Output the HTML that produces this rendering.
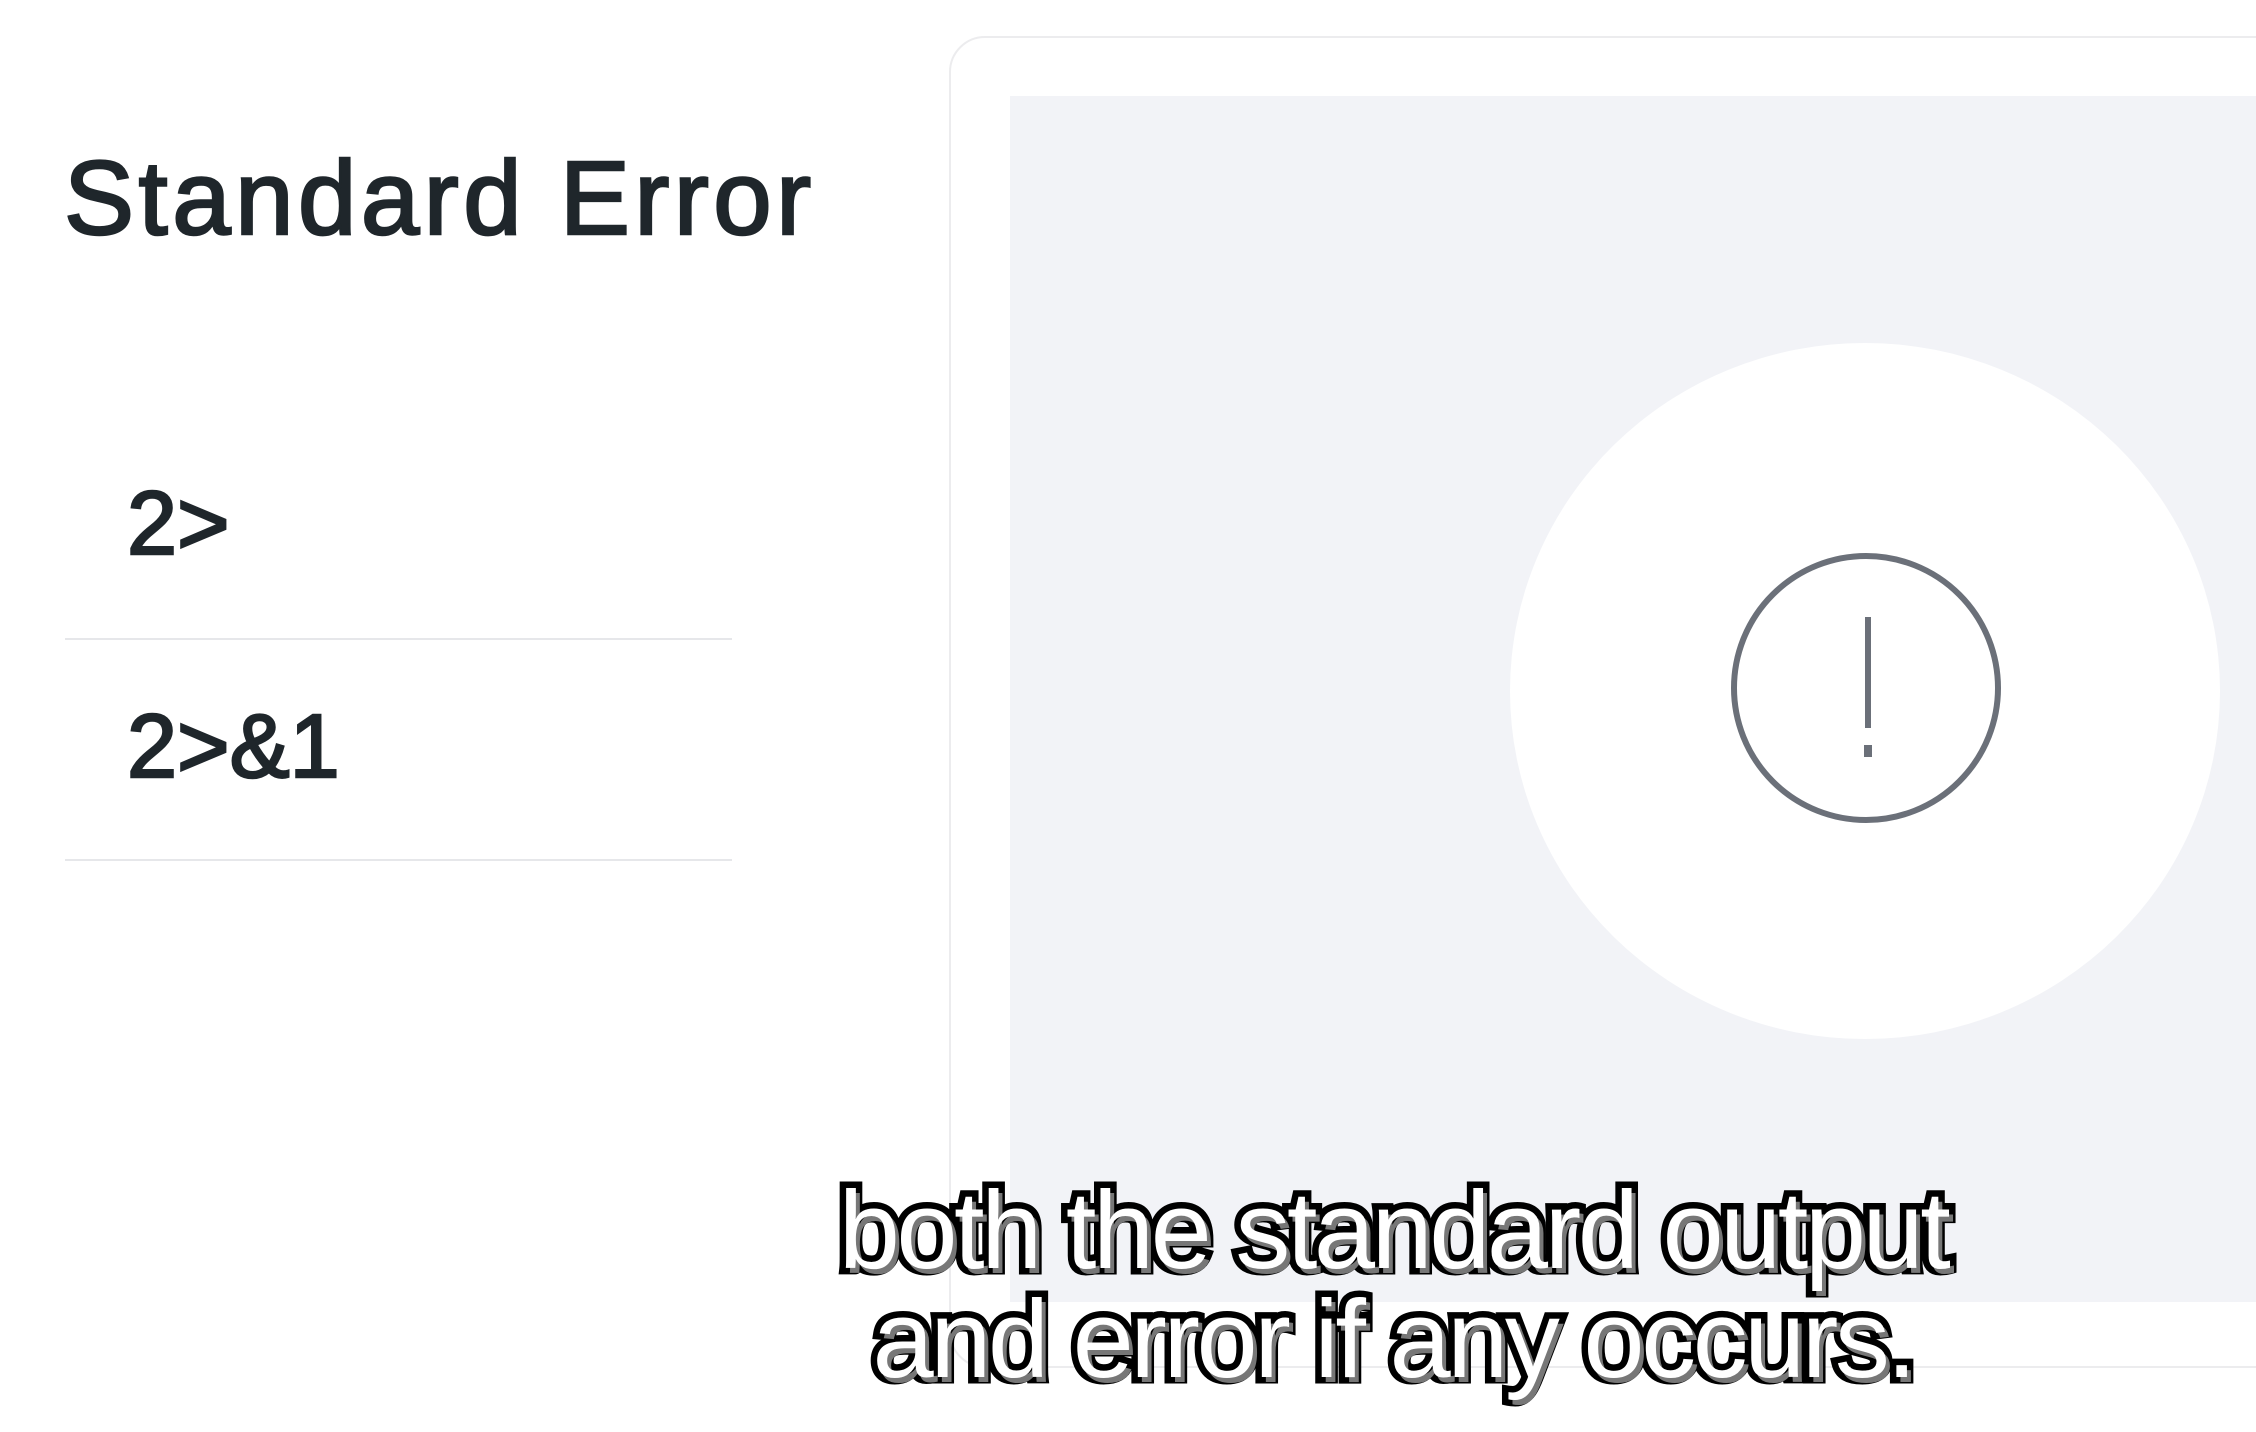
<!DOCTYPE html>
<html><head><style>
html,body{margin:0;padding:0}
body{width:2256px;height:1432px;background:#fff;position:relative;overflow:hidden;font-family:"Liberation Sans","DejaVu Sans",sans-serif;color:#1f262b}
.t{position:absolute;white-space:nowrap;-webkit-text-stroke:2.5px #1f262b}
.card{position:absolute;left:949px;top:36px;width:1400px;height:1328px;border:2px solid #ececee;border-radius:36px;background:#fff}
.gray{position:absolute;left:1010px;top:96px;width:1300px;height:1206px;background:#f2f3f7}
.line{position:absolute;left:65px;width:667px;height:2px;background:#e6e7ea}
.sub{position:absolute;left:0;width:2786px;text-align:center;font-size:110px;letter-spacing:-3.5px;color:#fff;-webkit-text-stroke:13px #000;paint-order:stroke fill;text-shadow:4px 5px 0 #777;white-space:nowrap}
</style></head><body>
<div class="card"></div>
<div class="gray"></div>
<svg style="position:absolute;left:0;top:0" width="2256" height="1432">
<ellipse cx="1865" cy="691" rx="355" ry="348" fill="#fff"/>
<circle cx="1866" cy="688" r="132" fill="none" stroke="#6b7079" stroke-width="6"/>
<line x1="1868" y1="617" x2="1868" y2="728" stroke="#6b7079" stroke-width="6"/>
<rect x="1864" y="745" width="8" height="12" fill="#6b7079"/>
</svg>
<div class="t" style="left:64px;top:146px;font-size:105px;line-height:1;letter-spacing:4.5px">Standard Error</div>
<div class="t" style="left:127px;top:479px;font-size:90px;line-height:1">2&gt;</div>
<div class="line" style="top:638px"></div>
<div class="t" style="left:127px;top:702px;font-size:90px;line-height:1">2&gt;&amp;1</div>
<div class="line" style="top:859px"></div>
<div class="sub" style="top:1176px;line-height:1">both the standard output</div>
<div class="sub" style="top:1285px;line-height:1">and error if any occurs.</div>
</body></html>
